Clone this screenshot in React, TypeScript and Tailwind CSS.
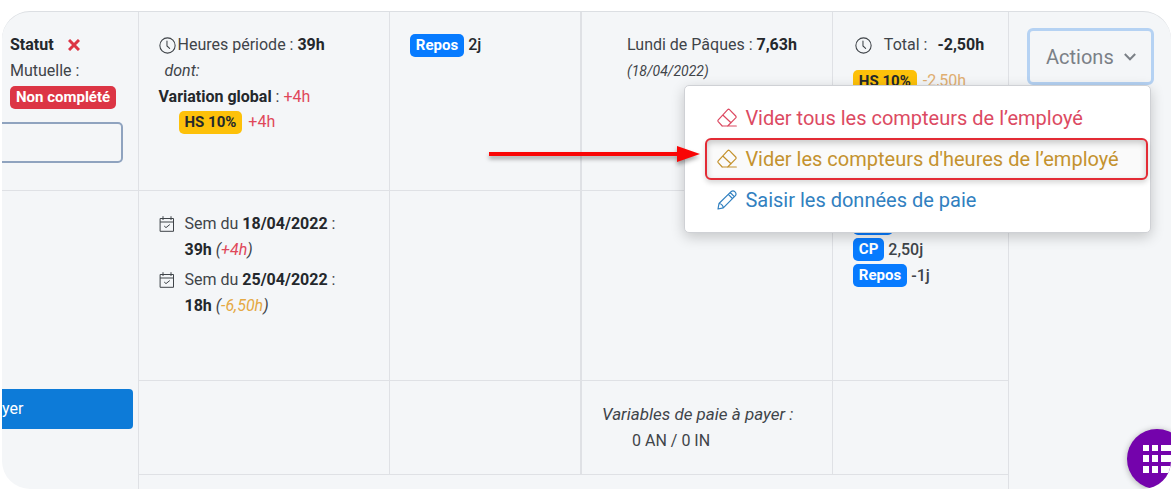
import type { ReactNode } from 'react';

type IconProps = { className?: string };

function ClockIcon({ className }: IconProps) {
  return (
    <svg className={className} viewBox="0 0 16 16" fill="none" stroke="currentColor" strokeWidth="1" strokeLinecap="round" aria-hidden="true">
      <circle cx="8" cy="8" r="7.2" />
      <path d="M7.5 3.8V8.4L10 10.8" />
    </svg>
  );
}

function CalendarIcon({ className }: IconProps) {
  return (
    <svg className={className} viewBox="0 0 16 16" fill="none" stroke="currentColor" strokeWidth="1" strokeLinecap="round" strokeLinejoin="round" aria-hidden="true">
      <path d="M1.5 2.5H14.5V15.3H1.5ZM1.5 6H14.5M4 .6V3.6M12 .6V3.6M5.5 10.3L7 11.6L10.5 8.8" />
    </svg>
  );
}

function EraserIcon({ className }: IconProps) {
  return (
    <svg className={className} viewBox="0 0 20 20" fill="none" stroke="currentColor" strokeWidth="1.2" strokeLinecap="round" strokeLinejoin="round" aria-hidden="true">
      <path d="M5.2 18L1.2 13.6Q.5 12.7 1.3 11.8L10.7 1.7Q11.6.8 12.5 1.7L18.7 8Q19.5 8.9 18.7 9.8L10.7 18M5.2 18H19.3M5.8 7L14 14.8" />
    </svg>
  );
}

function PencilIcon({ className }: IconProps) {
  return (
    <svg className={className} viewBox="0 0 20 20" fill="none" stroke="currentColor" strokeWidth="1.2" strokeLinecap="round" strokeLinejoin="round" aria-hidden="true">
      <path d="M1 19L2 13.5L14.3 1.4Q16.2 0 18 1.8Q19.8 3.7 18.4 5.6L6.3 17.8ZM2 13.5Q5.6 13.9 6.3 17.8M11.3 4.4L15.4 8.5M13.2 2.5L17.3 6.7" />
    </svg>
  );
}

function Badge({ className, children }: { className: string; children: ReactNode }) {
  return (
    <span className={`inline-block rounded-[5px] px-1.5 text-[15px] leading-[23px] font-bold ${className}`}>
      {children}
    </span>
  );
}

function ActionsMenu() {
  return (
    <div className="relative w-[127px]">
      <button
        type="button"
        aria-haspopup="menu"
        aria-expanded="true"
        className="flex h-[57px] w-full items-center justify-center gap-2.5 rounded-md border-[3px] border-[#b5d2f3] text-[20px] text-[#7b8087]"
      >
        Actions
        <svg className="w-3" viewBox="0 0 12 8" fill="none" stroke="currentColor" strokeWidth="2" aria-hidden="true">
          <path d="M.8 1L6 6.3L11.2 1" />
        </svg>
      </button>

      <ul className="absolute top-full right-[3px] z-10 w-[467px] rounded-[5px] border border-[#cfd1d5] bg-white px-0.5 py-3 text-[20px] shadow-[0_4px_14px_rgba(0,0,0,0.2)]">
        <li className="ml-[18px]">
          <a href="#vider-tous" className="flex h-10 items-center gap-2 pl-3 text-[#dc4a62]">
            <EraserIcon className="size-5" />
            Vider tous les compteurs de l’employé
          </a>
        </li>
        <li className="relative ml-[18px]">
          <a
            href="#vider-heures"
            className="flex h-[42px] items-center gap-2 rounded-md border-2 border-[#e32b35] bg-[#fafafa] pl-2.5 whitespace-nowrap text-[#c4922e] shadow-[inset_0_3px_6px_rgba(0,0,0,0.2),0_3px_5px_rgba(0,0,0,0.15)]"
          >
            <EraserIcon className="size-5" />
            Vider les compteurs d'heures de l’employé
          </a>
          <svg
            className="absolute top-1.5 right-full mr-1 w-[212px] drop-shadow-[0_3px_2px_rgba(0,0,0,0.35)]"
            viewBox="0 0 212 20"
            aria-hidden="true"
          >
            <path d="M0 8H188V2L211 10L188 18V12H0Z" fill="#f90606" />
          </svg>
        </li>
        <li className="ml-[18px]">
          <a href="#saisir" className="flex h-10 items-center gap-2 pl-3 text-[#3180c0]">
            <PencilIcon className="size-5" />
            Saisir les données de paie
          </a>
        </li>
      </ul>
    </div>
  );
}

const weeks = [
  { date: '18/04/2022', hours: '39h', delta: '+4h', color: 'text-[#e0485a]' },
  { date: '25/04/2022', hours: '18h', delta: '-6,50h', color: 'text-[#e5a944]' },
];

export default function App() {
  return (
    <main className="bg-white pt-[11px] pr-[5px] pb-0.5 pl-0.5 font-['Roboto',sans-serif] text-[16px] text-[#3f4449]">
      <div className="relative overflow-hidden rounded-[28px] border-t border-[#dcdfe3] bg-[#f4f6f8]">
        <table className="w-full table-fixed border-collapse text-left [&_td]:border-[#dfe1e5] [&_td]:align-top">
          <colgroup>
            <col className="w-[136px]" />
            <col className="w-[21.5%]" />
            <col className="w-[16.4%]" />
            <col className="w-[21.5%]" />
            <col className="w-[15.1%]" />
            <col />
          </colgroup>
          <tbody>
            <tr className="h-[178px]">
              <td className="border-r border-b pt-5 leading-[26px]">
                <div className="pl-2">
                  <div className="flex items-center gap-3.5">
                    <b className="text-[#24282c]">Statut</b>
                    <svg className="w-3" viewBox="0 0 12 12" stroke="#dc3545" strokeWidth="3" aria-hidden="true">
                      <path d="M1 1L11 11M11 1L1 11" />
                    </svg>
                  </div>
                  <label htmlFor="mutuelle" className="block">Mutuelle :</label>
                  <Badge className="bg-[#dc3545] text-white">Non complété</Badge>
                </div>
                <input
                  id="mutuelle"
                  type="text"
                  className="mt-3 block h-[41px] w-[121px] rounded-r-[5px] border-2 border-l-0 border-[#8fa3bf] px-2"
                />
              </td>
              <td className="border-r border-b pt-5 pl-5 leading-[26px]">
                <div className="flex items-center gap-0.5">
                  <ClockIcon className="size-[17px]" />
                  <span>Heures période : <b className="text-[#24282c]">39h</b></span>
                </div>
                <div className="pl-1.5 italic">dont:</div>
                <div>
                  <b className="text-[#24282c]">Variation global</b> : <span className="text-[#e0485a]">+4h</span>
                </div>
                <div className="flex items-center gap-1.5 pl-5 leading-[24px]">
                  <Badge className="bg-[#fdc10a] text-[#24282c]">HS 10%</Badge>
                  <span className="text-[#e0485a]">+4h</span>
                </div>
              </td>
              <td className="border-r-2 border-b pt-5 pl-5 leading-[26px]">
                <div className="flex items-center gap-1 text-[#24282c]">
                  <Badge className="bg-[#077bff] text-white">Repos</Badge>
                  <span className="font-medium">2j</span>
                </div>
              </td>
              <td className="border-r border-b pt-5 pl-[45px] leading-[26px]">
                <div>Lundi de Pâques : <b className="text-[#24282c]">7,63h</b></div>
                <div className="text-[14px] italic">(18/04/2022)</div>
              </td>
              <td className="border-r border-b pt-5 pl-5 leading-[26px]">
                <div className="flex items-center pl-0.5">
                  <ClockIcon className="size-[17px]" />
                  <span className="pl-3">Total :</span>
                  <b className="pl-2.5 text-[#24282c]">-2,50h</b>
                </div>
                <div className="mt-2.5 flex items-center gap-1.5">
                  <Badge className="bg-[#fdc10a] text-[#24282c]">HS 10%</Badge>
                  <span className="text-[#e0ae70]">-2,50h</span>
                </div>
              </td>
              <td rowSpan={4} className="pt-4 pl-[18px]">
                <ActionsMenu />
              </td>
            </tr>
            <tr className="h-[190px]">
              <td rowSpan={3} className="border-r pt-[198px]">
                <button type="button" className="block h-10 w-[131px] rounded-r-[4px] bg-[#0d7bd8] text-left text-white">
                  yer
                </button>
              </td>
              <td className="border-r border-b pt-5 pl-5 leading-[26px]">
                <div className="flex flex-col gap-1">
                  {weeks.map((week) => (
                    <div key={week.date} className="flex gap-2.5">
                      <CalendarIcon className="mt-[5px] size-4" />
                      <div>
                        Sem du <b className="text-[#24282c]">{week.date}</b> :
                        <br />
                        <b className="text-[#24282c]">{week.hours}</b>{' '}
                        <i>(<span className={week.color}>{week.delta}</span>)</i>
                      </div>
                    </div>
                  ))}
                </div>
              </td>
              <td className="border-r-2 border-b" />
              <td className="border-r border-b" />
              <td className="border-r border-b pt-5 pl-5 leading-[26px] font-medium">
                <div className="flex items-center gap-1">
                  <Badge className="bg-[#077bff] text-white">RTT</Badge>1j
                </div>
                <div className="flex items-center gap-1">
                  <Badge className="bg-[#077bff] text-white">CP</Badge>2,50j
                </div>
                <div className="flex items-center gap-1">
                  <Badge className="bg-[#077bff] text-white">Repos</Badge>-1j
                </div>
              </td>
            </tr>
            <tr className="h-[94px]">
              <td className="border-r border-b" />
              <td className="border-r-2 border-b" />
              <td className="border-r border-b pt-5 pl-5 leading-[26px]">
                <i className="text-[17px]">Variables de paie à payer :</i>
                <div className="pl-[30px]">0 AN / 0 IN</div>
              </td>
              <td className="border-r border-b" />
            </tr>
            <tr className="h-[15px]">
              <td colSpan={4} className="border-r" />
            </tr>
          </tbody>
        </table>

        <button
          type="button"
          aria-label="Applications"
          className="absolute -right-4 bottom-0 flex size-[60px] items-center rounded-full bg-[#7403ac] pl-4 shadow-[0_1px_6px_rgba(0,0,0,0.3)]"
        >
          <svg className="w-[30px]" viewBox="0 0 30 28" fill="#fff" aria-hidden="true">
            <path d="M0 0H6V6H0ZM9 0H15V6H9ZM18 0H30V6H18ZM0 10H6V17H0ZM9 10H15V17H9ZM18 10H30V17H18ZM0 21H6V28H0ZM9 21H15V28H9ZM18 21H30V28H18Z" />
          </svg>
        </button>
      </div>
    </main>
  );
}
